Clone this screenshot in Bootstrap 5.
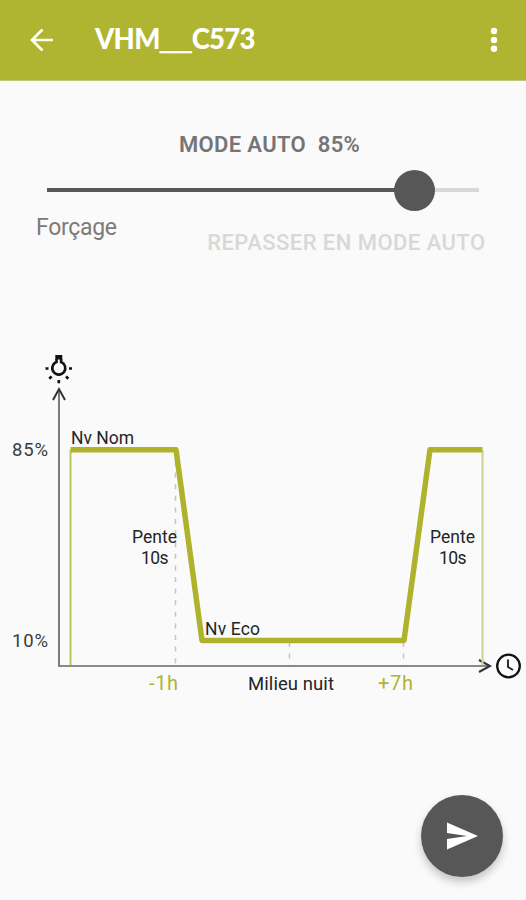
<!DOCTYPE html>
<html lang="fr">
<head>
<meta charset="utf-8">
<meta name="viewport" content="width=device-width, initial-scale=1">
<title>VHM__C573</title>
<link href="https://cdn.jsdelivr.net/npm/bootstrap@5.3.0/dist/css/bootstrap.min.css" rel="stylesheet">
<style>
body{background:#fafafa;font-family:Roboto,sans-serif;color:#222}
.screen{height:900px;overflow:hidden}
.appbar{height:81px;background:#afb531;border-bottom:1px solid #c3c57c;padding:0 22px 0 27px!important;flex-wrap:nowrap}
.appbar .btn{line-height:0;border:0}
.device{font:900 27.5px/36px Lato,sans-serif;color:#fff;margin:-3px 0 0 40px;letter-spacing:-.7px}
.device .gap-mark{font:700 28.8px/30px "Liberation Sans",sans-serif;letter-spacing:0;text-shadow:0 1px #fff}
.mode-title{font-size:22px;line-height:26px;font-weight:600;color:#757575;margin:51px 0 0 179px;white-space:pre;letter-spacing:.35px}
.level{height:42px;margin:11px 47px 0}
.level-rail{height:4px;background:#d8d8d8}
.level-fill{height:4px;background:#585858}
.level-knob{width:41px;height:41px;background:#575757;margin-right:-20.5px;flex:none}
.force-row{padding:4px 40.5px 0 36px;height:46px}
.force-label{font-size:23px;line-height:27px;color:#7b7b7b;margin-top:-1px;letter-spacing:-.3px}
.auto-btn{font-size:22px;line-height:26px;font-weight:500;margin-top:15px;letter-spacing:.45px;--bs-btn-disabled-opacity:1;--bs-btn-disabled-color:#d8d8d8}
.chart{width:526px;height:360px;margin-top:87px}
.chart text{font-size:17.5px;fill:#252525}
.chart .hour{font-size:20px;fill:#afb531}
.chart .pct{font-size:18.5px;fill:#3c3c3c}
.send{width:82px;height:82px;background:#575757;box-shadow:0 5px 9px rgba(0,0,0,.22);margin:0 23px 23px 0}
</style>
<script src="https://cdn.jsdelivr.net/npm/bootstrap@5.3.0/dist/js/bootstrap.bundle.min.js" defer></script>
</head>
<body>
<div class="screen d-flex flex-column">
  <header class="appbar navbar justify-content-start">
    <button class="btn p-0" aria-label="Retour"><svg width="28" height="28" viewBox="0 0 28 28" fill="none" stroke="#fffff0" stroke-width="2.7"><path d="M26 14H5M15.500 3.500 5 14l10.500 10.500"/></svg></button>
    <h1 class="device">VHM<span class="gap-mark">__</span>C573</h1>
    <button class="btn p-0 ms-auto" aria-label="Menu"><svg width="20" height="28" viewBox="0 0 20 28" fill="#fff"><circle cx="10" cy="5" r="3.200"/><circle cx="10" cy="14" r="3.200"/><circle cx="10" cy="22.700" r="3.200"/></svg></button>
  </header>
  <main class="flex-grow-1">
    <h2 class="mode-title">MODE AUTO  85%</h2>
    <div class="level d-flex align-items-center">
      <div class="level-rail w-100 d-flex align-items-center">
        <div class="level-fill d-flex align-items-center justify-content-end" style="width:85%"><div class="level-knob rounded-circle"></div></div>
      </div>
    </div>
    <div class="force-row d-flex justify-content-between align-items-start">
      <span class="force-label">Forçage</span>
      <button class="auto-btn btn border-0 p-0" disabled>REPASSER EN MODE AUTO</button>
    </div>
    <svg class="chart d-block" viewBox="0 344 526 360" fill="none">
      <g stroke="#111" fill="none">
        <path d="M56.500 359v3a6.500 6.500 0 1 0 4.600 0V359" stroke-width="2.600"/>
        <path d="M55.300 355h7v4.500h-7z" fill="#111" stroke="none"/>
        <path d="M45.500 368.500H48.500M69 368.500H72M58.800 380v3.200M49.300 378.700l2.300-2.300M68.300 378.700l-2.300-2.300" stroke-width="2.700"/>
      </g>
      <g stroke="#c4c4c4" stroke-width="1.500" stroke-dasharray="5 6.600">
        <path d="M175.500 461V666M289.500 642V666M403.500 642V666"/>
      </g>
      <path d="M59 389V666H490" stroke="#666" stroke-width="1.700"/>
      <path d="M53 400l6-11 6 11M479 660l11 6-11 6" stroke="#333" stroke-width="2"/>
      <path d="M70.500 450V665" stroke="#bdc55b" stroke-width="2"/>
      <path d="M482.500 450V665" stroke="#d0d69a" stroke-width="2.200"/>
      <path d="M70.500 449.700H176L202 640.500H404L430 449.700H482.500" stroke="#afb22b" stroke-width="5.500" stroke-linejoin="round"/>
      <circle cx="508.500" cy="666" r="11.300" stroke="#111" stroke-width="2.300"/>
      <path d="M508 659.500V667l5 3" stroke="#222" stroke-width="1.900"/>
      <text class="pct" x="12" y="456" textLength="36">85%</text>
      <text class="pct" x="12" y="646.500" textLength="36">10%</text>
      <text x="71" y="444" textLength="63">Nv Nom</text>
      <text x="205" y="635" textLength="55">Nv Eco</text>
      <text x="132" y="543" textLength="45">Pente</text>
      <text x="141" y="563.500" textLength="27.500">10s</text>
      <text x="430" y="543" textLength="45">Pente</text>
      <text x="439" y="563.500" textLength="27.500">10s</text>
      <text class="hour" x="149" y="690" textLength="29">-1h</text>
      <text x="248" y="690" style="font-size:18.500px" textLength="86">Milieu nuit</text>
      <text class="hour" x="378" y="690" textLength="35">+7h</text>
    </svg>
  </main>
  <footer class="d-flex justify-content-end">
    <button class="send btn rounded-circle border-0 p-0 d-flex align-items-center justify-content-center" aria-label="Envoyer"><svg width="34" height="30" viewBox="0 0 34 30"><path d="M2 1.500 33 15 2 28.500V18l20-3L2 12z" fill="#fff"/></svg></button>
  </footer>
</div>
</body>
</html>
